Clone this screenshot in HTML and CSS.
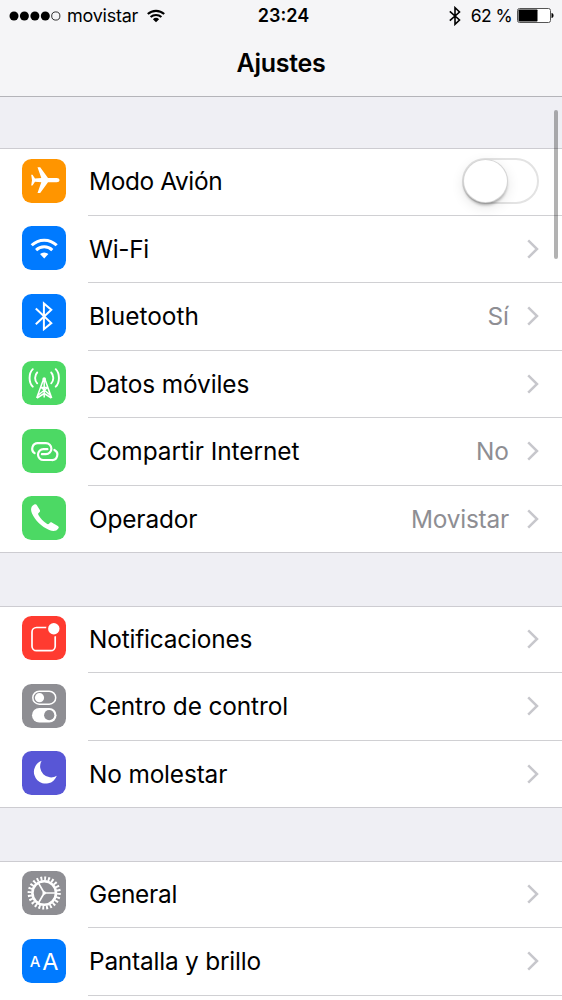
FILE: index.html
```
<!DOCTYPE html>
<html lang="es">
<head>
<meta charset="utf-8">
<title>Ajustes</title>
<link rel="stylesheet" href="styles.css">
</head>
<body>
<svg class="defs" aria-hidden="true">
  <symbol id="chevron" viewBox="0 0 12 20"><path d="M1.2 1.3 10 10 1.2 18.7" fill="none" stroke="#c7c7cc" stroke-width="2.5"/></symbol>
</svg>
<div class="phone">
  <header class="top">
    <div class="status">
      <div class="carrier">
        <svg class="dots" viewBox="0 0 52 10"><g><circle cx="5" cy="5" r="4.5"/><circle cx="15.4" cy="5" r="4.5"/><circle cx="25.9" cy="5" r="4.5"/><circle cx="36.3" cy="5" r="4.5"/><circle cx="46.8" cy="5" r="4.1" fill="none" stroke="#000" stroke-width=".8"/></g></svg>
        <span class="carrier-name">movistar</span>
        <svg class="wifi" viewBox="0 0 18 14"><g fill="none" stroke="#000" stroke-width="2.1"><path d="M.8 5.1a12 12 0 0 1 16.4 0"/><path d="M3.6 8.1a7.9 7.9 0 0 1 10.8 0"/></g><path d="M9 13.3 5.9 10.2a4.5 4.5 0 0 1 6.2 0z"/></svg>
      </div>
      <span class="clock">23:24</span>
      <div class="power">
        <svg class="bt" viewBox="0 0 12 20"><path d="M.8 5.3 10.5 14 6 18.3V1.7L10.5 6 .8 14.7" fill="none" stroke="#000" stroke-width="1.6"/></svg>
        <span class="percent">62 %</span>
        <svg class="battery" viewBox="0 0 37 15"><rect x=".5" y=".5" width="33" height="14" rx="2" fill="#fff" stroke="#555"/><rect x="1.5" y="1.5" width="19" height="12" rx=".7"/><path d="M34.5 5c2.7 0 2.7 5 0 5z"/></svg>
      </div>
    </div>
    <h1 class="title">Ajustes</h1>
  </header>

  <main class="groups">
    <section class="group">
      <div class="row">
        <svg class="icon orange" viewBox="0 0 44 44"><path fill="#fff" d="M37.5 21.2c0 1.3-1.2 2-2.8 2H26L18.2 34h-2.7l3.8-10.8-6.3-.4-2.5 3.7H9.2l.8-5.3-.8-5.4h1.3l2.5 3.7 6.3-.4L15.5 8.3h2.7L26 19.1h8.7c1.6 0 2.8.8 2.8 2.1z"/></svg>
        <div class="cell"><span class="label l-avion">Modo Avión</span><span class="switch"><span class="knob"></span></span></div>
      </div>
      <div class="row">
        <svg class="icon blue" viewBox="0 0 44 44"><g fill="none" stroke="#fff" stroke-width="3"><path d="M9.7 19.3a17.8 17.8 0 0 1 25 0"/><path d="M14.1 24.1a11.7 11.7 0 0 1 16.2 0"/></g><path fill="#fff" d="M22.2 32.5 18 28.1a6 6 0 0 1 8.4 0z"/></svg>
        <div class="cell"><span class="label l-wifi">Wi-Fi</span><svg class="chevron"><use href="#chevron"/></svg></div>
      </div>
      <div class="row">
        <svg class="icon blue" viewBox="0 0 44 44"><path d="M13.8 14.4 29.3 29.1 21.9 35.2V9.4l7.4 6.3L13.800 30.200" fill="none" stroke="#fff" stroke-width="2"/></svg>
        <div class="cell"><span class="label l-bt">Bluetooth</span><span class="value">Sí</span><svg class="chevron"><use href="#chevron"/></svg></div>
      </div>
      <div class="row">
        <svg class="icon green" viewBox="0 0 44 44"><g fill="none" stroke="#fff" stroke-width="1.9" stroke-linecap="round"><path d="M10.8 8.200c-4.300 4.300-4.300 13.200 0 17.500M33.700 8.200c4.300 4.300 4.300 13.200 0 17.500M15.200 11.500c-2.800 2.900-2.800 8 0 10.800M29.200 11.500c2.800 2.900 2.800 8 0 10.800"/><path stroke-width="1.500" stroke-linecap="butt" d="M22.200 18v18.500M21.600 18l-6.900 19M22.800 18l6.900 19M18.700 26.500h7l3 8-9.500-8M25.700 26.500l-10 8M15 37l7.200-4.500 7.200 4.500"/></g><circle cx="22.200" cy="18" r="1.800" fill="#fff"/></svg>
        <div class="cell"><span class="label l-datos">Datos móviles</span><svg class="chevron"><use href="#chevron"/></svg></div>
      </div>
      <div class="row">
        <svg class="icon green" viewBox="0 0 44 44"><g fill="none" stroke="#fff" stroke-width="2.200" stroke-linecap="round"><path d="M12.600 24.200A5.500 5.500 0 0 1 15.800 14.200h8.100a5.500 5.500 0 0 1 0 11h-4"/><path d="M32.400 21A5.300 5.300 0 0 1 29.400 31h-8a5.400 5.400 0 0 1 0-10.800h4"/></g></svg>
        <div class="cell"><span class="label l-compartir">Compartir Internet</span><span class="value">No</span><svg class="chevron"><use href="#chevron"/></svg></div>
      </div>
      <div class="row">
        <svg class="icon green" viewBox="0 0 44 44"><path fill="#fff" d="M12.200 8.600c1.300-.7 2.100-.4 2.700.6l2.900 4.700c.6 1.100.3 1.800-.7 2.500-1.200.8-1.200 1.600-.5 2.900 1.700 2.900 4.700 6 7.900 8.300 1.300.9 2 .8 2.800-.2.900-1.200 1.700-1.400 2.900-.7l5.600 3.200c1.100.7 1.300 1.500.5 2.600-1.800 2.700-5 3.300-9.100 1.500-7.800-3.400-14.300-9.700-17.300-16.700-1.600-3.900-.9-7 2.300-8.700z"/></svg>
        <div class="cell last"><span class="label l-operador">Operador</span><span class="value v-movistar">Movistar</span><svg class="chevron"><use href="#chevron"/></svg></div>
      </div>
    </section>

    <section class="group">
      <div class="row">
        <svg class="icon red" viewBox="0 0 44 44"><rect x="10" y="11.500" width="23.200" height="23.200" rx="4.500" fill="none" stroke="#fff" stroke-width="1.700"/><circle cx="31.800" cy="12.800" r="7.700" fill="#ff3b30"/><circle cx="31.800" cy="12.800" r="5.700" fill="#fff"/></svg>
        <div class="cell"><span class="label l-notif">Notificaciones</span><svg class="chevron"><use href="#chevron"/></svg></div>
      </div>
      <div class="row">
        <svg class="icon gray" viewBox="0 0 44 44"><rect x="10.800" y="7.200" width="22.900" height="13" rx="6.500" fill="none" stroke="#fff" stroke-width="1.500"/><circle cx="17.500" cy="13.700" r="4.600" fill="#fff"/><rect x="10" y="24" width="24.500" height="14.500" rx="7.250" fill="#fff"/><circle cx="27.200" cy="31.200" r="5.100" fill="#8e8e93"/></svg>
        <div class="cell"><span class="label l-centro">Centro de control</span><svg class="chevron"><use href="#chevron"/></svg></div>
      </div>
      <div class="row">
        <svg class="icon purple" viewBox="0 0 44 44"><path fill="#fff" d="M19.700 9.700A11.800 11.800 0 1 0 34.800 24.800 11 11 0 0 1 19.700 9.700z"/></svg>
        <div class="cell last"><span class="label l-molestar">No molestar</span><svg class="chevron"><use href="#chevron"/></svg></div>
      </div>
    </section>

    <section class="group">
      <div class="row">
        <svg class="icon gray" viewBox="0 0 44 44"><g fill="none" stroke="#fff"><circle cx="22.200" cy="22" r="11.800" stroke-width="2.600"/><circle cx="22.200" cy="22" r="14.600" stroke-width="4" pathLength="48" stroke-dasharray="1 1"/><path stroke-width="1.700" d="M22.200 22h12M22.200 22l-6-10.400M22.200 22l-6 10.400"/></g><circle cx="22.200" cy="22" r="1.800" fill="#fff"/></svg>
        <div class="cell"><span class="label l-general">General</span><svg class="chevron"><use href="#chevron"/></svg></div>
      </div>
      <div class="row">
        <svg class="icon blue" viewBox="0 0 44 44"><g class="letters"><text class="small-a" x="7.800" y="28.300">A</text><text class="big-a" x="20.300" y="30.800">A</text></g></svg>
        <div class="cell"><span class="label l-pantalla">Pantalla y brillo</span><svg class="chevron"><use href="#chevron"/></svg></div>
      </div>
      <div class="row"></div>
    </section>
  </main>
  <div class="scrollbar"></div>
</div>
</body>
</html>
```
FILE: styles.css
```
* { box-sizing: border-box; }
body { margin: 0; font-family: Inter, "Liberation Sans", sans-serif; color: #000; }
.defs { position: absolute; width: 0; height: 0; }
.phone { position: relative; width: 562px; height: 1000px; overflow: hidden; background: #efeff4; }
.top { height: 97px; background: #f5f5f7; border-bottom: 1px solid #b4b4b9; }
.status { display: grid; grid-template-columns: 1fr auto 1fr; align-items: center; height: 31px; padding: 0 8px 0 9px; line-height: 31px; font-size: 18px; }
.carrier, .power { display: flex; align-items: center; }
.power { justify-content: flex-end; }
.dots { width: 52px; height: 10px; margin-right: 6px; }
.carrier-name { letter-spacing: -.25px; }
.wifi { width: 18px; height: 14px; margin-left: 9px; }
.clock { padding-left: 4px; font-weight: 600; letter-spacing: 0; }
.bt { width: 12px; height: 20px; margin-right: 10px; }
.percent { font-size: 17.5px; letter-spacing: -.6px; }
.battery { width: 37px; height: 15px; margin-left: 5px; }
.title { margin: 0; height: 65px; line-height: 65px; text-align: center; font-size: 25px; font-weight: 600; letter-spacing: -.3px; }
.groups { display: flex; flex-direction: column; gap: 52.500px; padding-top: 51px; }
.group { background: #fff; border-top: 1px solid #cdccd1; border-bottom: 1px solid #cdccd1; }
.row { display: flex; height: 67.500px; padding-left: 22px; }
.row:first-child { margin-top: -1px; }
.row:last-child { margin-bottom: -1px; }
.icon { flex: none; width: 44px; height: 44px; margin: 10.700px 22px 0 0; border-radius: 9.500px; }
.orange { background: #ff9500; }
.blue { background: #007aff; }
.green { background: #4cd964; }
.red { background: #ff3b30; }
.gray { background: #8e8e93; }
.purple { background: #5856d6; }
.letters { fill: #fff; font-family: Inter, sans-serif; }
.small-a { font-size: 15px; font-weight: 500; }
.big-a { font-size: 23.500px; }
.cell { flex: 1; display: flex; align-items: center; padding: 0 23px 0 1px; border-bottom: 1px solid #d0d0d3; font-size: 24.400px; white-space: nowrap; }
.cell.last { border-bottom-color: transparent; }
.label { margin-right: auto; }
.l-avion { letter-spacing: -.37px; }
.l-wifi { letter-spacing: -.3px; }
.l-datos { letter-spacing: -.1px; }
.l-compartir { letter-spacing: -.05px; }
.l-operador { letter-spacing: -.15px; }
.l-notif { letter-spacing: -.18px; }
.l-centro { letter-spacing: -.12px; }
.l-molestar { letter-spacing: -.15px; }
.l-general { letter-spacing: -.25px; }
.l-pantalla { letter-spacing: -.2px; }
.value { color: #8e8e93; margin-right: 18px; }
.v-movistar { letter-spacing: -.2px; }
.chevron { flex: none; width: 12px; height: 20px; }
.switch { display: flex; width: 77px; height: 46px; border: 2px solid #e3e3e3; border-radius: 23px; }
.knob { width: 43px; height: 42px; border-radius: 50%; background: #fff; box-shadow: 0 0 0 1px #d5d5d5, 0 3px 3px rgba(0,0,0,.3), 0 4px 14px rgba(0,0,0,.12); }
.scrollbar { position: absolute; left: 554px; top: 110px; width: 4px; height: 149px; border-radius: 2px; background: rgba(0,0,0,.3); }
```
